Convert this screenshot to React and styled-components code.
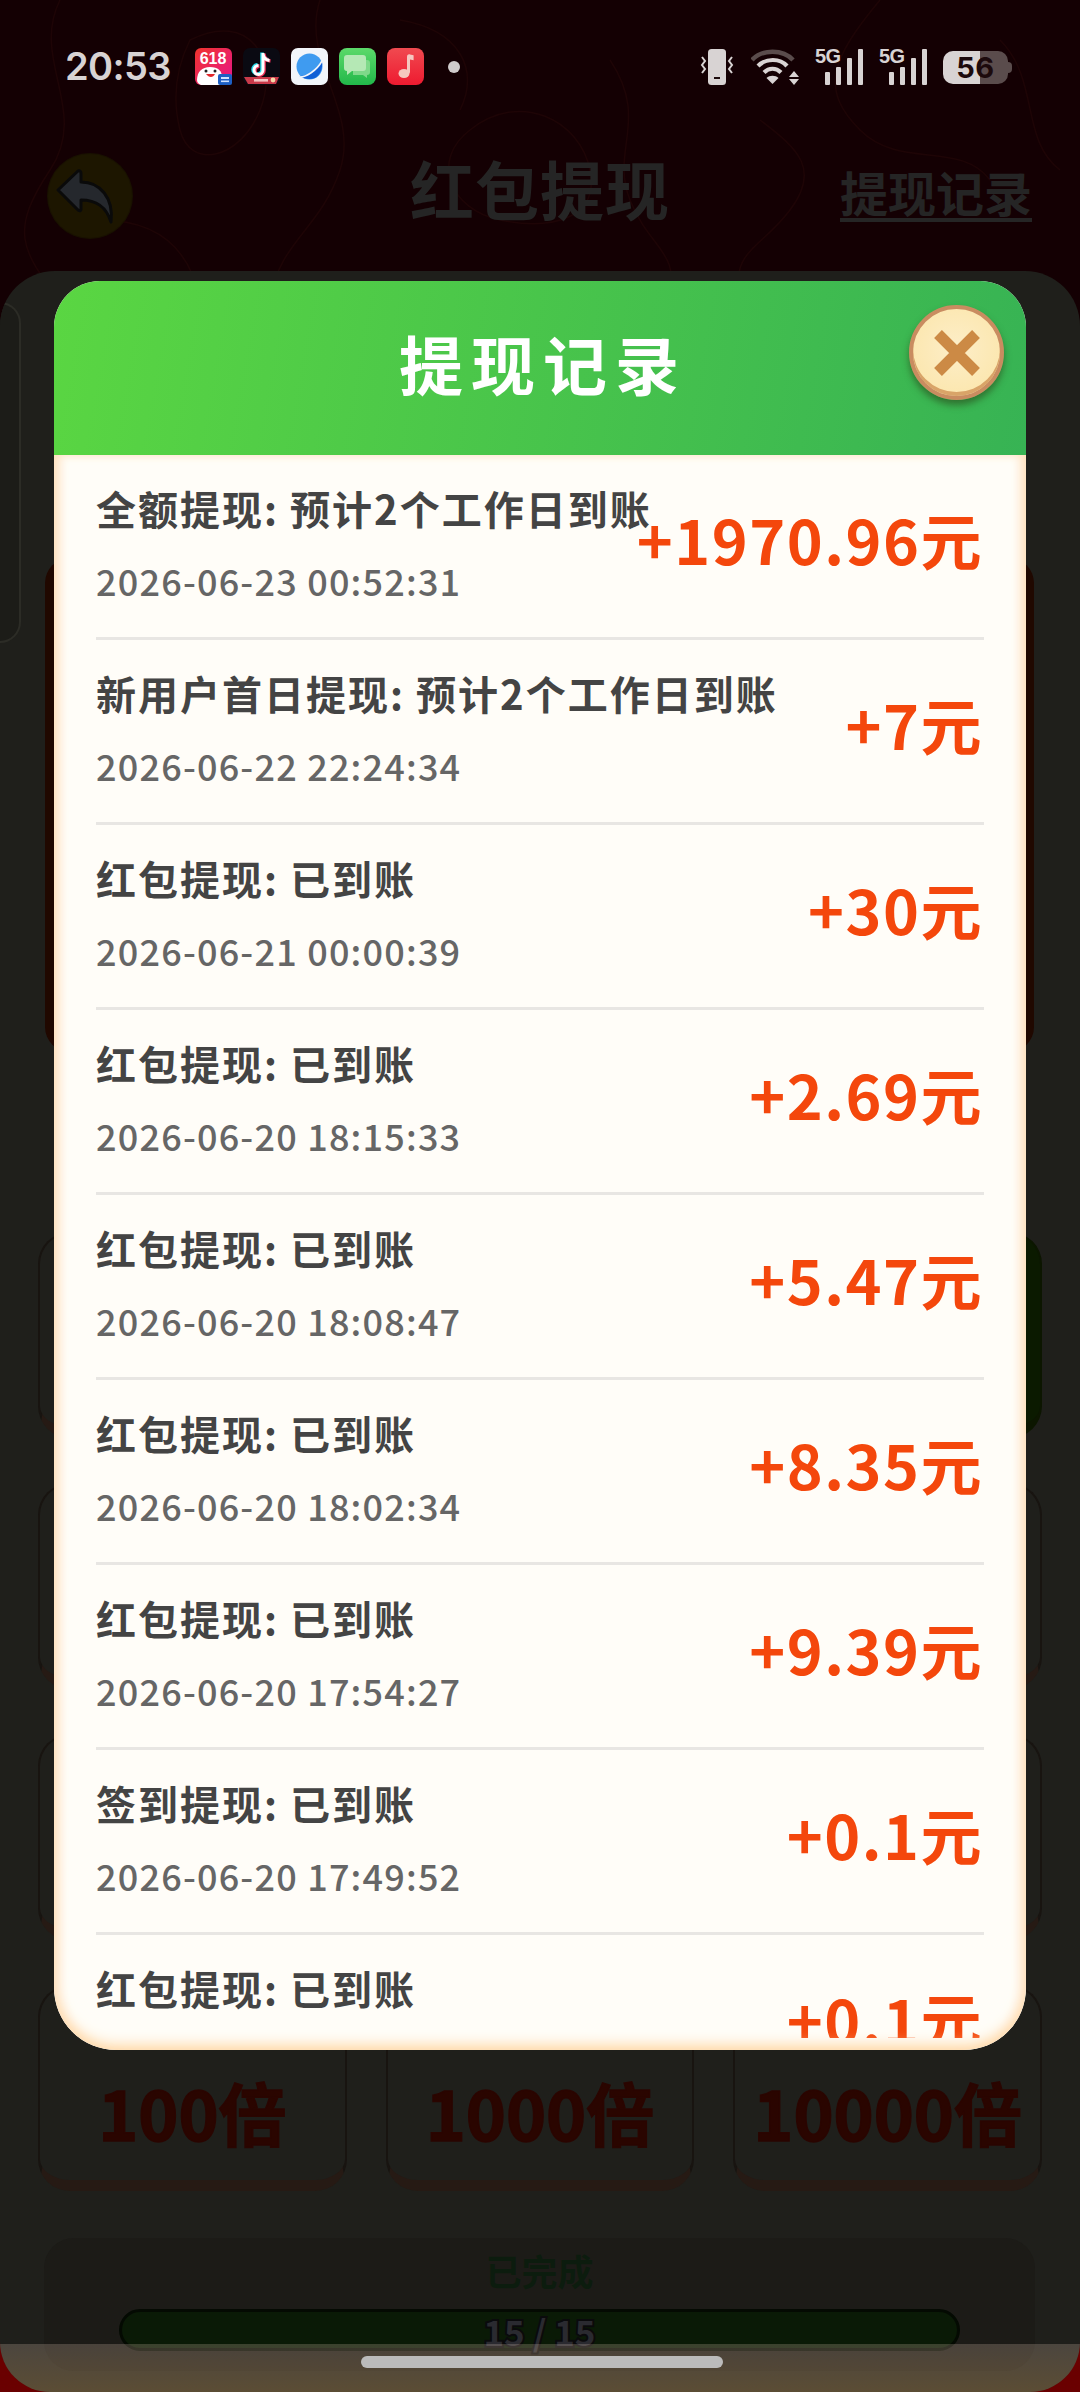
import React from 'react';
import styled, { createGlobalStyle } from 'styled-components';

const CJK = '"Noto Sans CJK SC", "Noto Sans", sans-serif';

const patternSvg = `<svg xmlns='http://www.w3.org/2000/svg' width='1080' height='300' fill='none' stroke='#1e0406' stroke-width='1.500'><path d='M60 0C30 60 90 110 50 170S20 250 60 300M190 40c60-30 90 20 70 70s-70 60-80 20 0-70 10-90zM320 0c-20 60 40 110 20 170s-60 70-70 130M470 130c50-40 110-10 120 40s-40 60-90 50-70-60-30-90zM610 60c40 60 0 90 20 140s50 50 40 100M760 120c40 30 60 50 30 90s-60 40-50 90M880 0c-50 60-60 90-20 130s100 10 130 50M1000 40c40 40 20 100 60 130M400 20c60 10 80 50 60 90M100 220c60 0 90 30 100 80'/></svg>`;

const Global = createGlobalStyle`
  html, body { margin: 0; padding: 0; background: #140003; }
  * { box-sizing: border-box; }
`;

const Page = styled.div`
  position: relative;
  width: 1080px;
  height: 2392px;
  overflow: hidden;
  display: flex;
  flex-direction: column;
  font-family: ${CJK};
  background:
    url("data:image/svg+xml,${encodeURIComponent(patternSvg)}") no-repeat 0 0,
    linear-gradient(#140003 2300px, #6a0000 2300px);
`;

const StatusBar = styled.div`
  height: 121px;
  flex: none;
  padding: 48px 68px 0 65px;
  display: flex;
  justify-content: space-between;
  align-items: flex-start;
`;
const StatusLeft = styled.div`
  display: flex;
  align-items: center;
  height: 37px;
`;
const Clock = styled.span`
  font-family: Inter, sans-serif;
  font-weight: 600;
  font-size: 38px;
  letter-spacing: -0.6px;
  color: #d8d3d3;
  width: 130px;
  line-height: 37px;
`;
const AppIcons = styled.div`
  display: flex;
  gap: 11px;
  align-items: center;
`;
const AppIcon = styled.svg`
  width: 37px;
  height: 37px;
  display: block;
`;
const Dot = styled.span`
  width: 12px;
  height: 12px;
  border-radius: 50%;
  background: #d0cccc;
  margin-left: 24px;
`;
const StatusRight = styled.div`
  display: flex;
  align-items: flex-start;
  gap: 16px;
  height: 37px;
`;
const SmallIcon = styled.svg`
  display: block;
  height: 37px;
  width: ${p => p.$w}px;
`;
const Signal = styled.div`
  position: relative;
  width: 48px;
  height: 37px;
  display: flex;
  align-items: flex-end;
  justify-content: flex-end;
  gap: 5.5px;
`;
const NetLabel = styled.span`
  position: absolute;
  left: 0;
  top: -2px;
  font-family: "Liberation Sans", sans-serif;
  font-weight: 700;
  font-size: 20px;
  line-height: 20px;
  letter-spacing: -0.5px;
  color: #d8d3d3;
`;
const SignalBar = styled.span`
  width: 5.5px;
  height: ${p => p.$h}px;
  background: #d8d3d3;
  border-radius: 1px;
`;
const Battery = styled.div`
  position: relative;
  width: 65px;
  height: 33px;
  margin: 3px 4px 0 0;
  border-radius: 10px;
  background: linear-gradient(90deg, #d8d3d3 57%, #5a4c4c 57%);
  display: flex;
  align-items: center;
  justify-content: center;
  font-family: Inter, sans-serif;
  font-weight: 700;
  font-size: 29px;
  letter-spacing: 0.5px;
  color: #1c0a0c;
  &::after {
    content: '';
    position: absolute;
    right: -4px;
    top: 11px;
    width: 4px;
    height: 11px;
    border-radius: 0 4px 4px 0;
    background: #5a4c4c;
  }
`;

const Header = styled.div`
  height: 150px;
  flex: none;
  display: grid;
  grid-template-columns: 1fr auto 1fr;
  align-items: center;
  padding: 0 48px;
`;
const BackButton = styled.div`
  width: 84px;
  height: 84px;
  border-radius: 50%;
  background: #1d1600;
  box-shadow: 0 0 0 1px #191100;
`;
const PageTitle = styled.div`
  font-weight: 700;
  font-size: 64px;
  letter-spacing: 1px;
  line-height: 70px;
  color: #252525;
  margin-bottom: 19px;
`;
const RecordsLink = styled.div`
  justify-self: end;
  font-weight: 700;
  font-size: 48px;
  line-height: 54px;
  color: #252525;
  border-bottom: 4px solid #252525;
  margin-bottom: 6px;
`;

const Panel = styled.div`
  position: relative;
  flex: 1;
  background: #1f1f1b;
  border-radius: 55px 55px 50px 50px;
  padding-top: 31px;
  overflow: hidden;
  &::after {
    content: '';
    position: absolute;
    left: 0;
    right: 0;
    bottom: 0;
    height: 48px;
    background: linear-gradient(rgba(255, 225, 205, 0.2), rgba(255, 200, 120, 0.27));
  }
`;
const TopRow = styled.div`
  display: flex;
  align-items: flex-start;
  height: 750px;
`;
const SideStrip = styled.div`
  width: 21px;
  height: 341px;
  flex: none;
  background: #1c1c18;
  border: 2px solid #2c2c26;
  border-left: none;
  border-radius: 0 26px 26px 0;
`;
const RedCard = styled.div`
  flex: 1;
  height: 494px;
  margin: 256px 46px 0 24px;
  background: #200800;
  border-radius: 25px;
`;
const MultiplierGrid = styled.div`
  margin: 180px 38px 0;
  display: grid;
  grid-template-columns: repeat(3, 1fr);
  column-gap: 39px;
  row-gap: 45px;
`;
const MultiplierButton = styled.div`
  height: 206px;
  border: 2px solid ${p => (p.$done ? '#0c1600' : '#181410')};
  border-bottom: 11px solid ${p => (p.$done ? '#0c1600' : '#261a14')};
  border-radius: 32px;
  background: ${p => (p.$done ? '#0b1a00' : '#1f1f1b')};
  display: flex;
  align-items: center;
  justify-content: center;
  font-weight: 700;
  font-size: 68px;
  color: #2a0500;
  -webkit-text-stroke: 1.5px #2a0500;
  padding-top: 56px;
`;
const ProgressCard = styled.div`
  margin: 47px 45px 0 44px;
  height: 133px;
  border-radius: 30px;
  background: #1c1b17;
  display: flex;
  flex-direction: column;
  align-items: center;
  padding: 10px 75px 0;
`;
const ProgressLabel = styled.div`
  font-weight: 700;
  font-size: 36px;
  line-height: 44px;
  color: #0c1c0e;
`;
const ProgressBar = styled.div`
  margin-top: 17px;
  width: 100%;
  height: 42px;
  flex: none;
  border: 3px solid #040a02;
  border-radius: 21px;
  background: #0a1a06;
  display: flex;
  align-items: center;
  justify-content: center;
  font-weight: 700;
  font-size: 35px;
  color: #2a2a30;
  paint-order: stroke fill;
  -webkit-text-stroke: 4px #0a0a0c;
`;
const HomeBar = styled.div`
  position: absolute;
  left: 361px;
  top: 2356px;
  width: 362px;
  height: 12px;
  border-radius: 6px;
  background: #bbbbbb;
`;

const Modal = styled.div`
  position: absolute;
  left: 54px;
  top: 281px;
  width: 972px;
  height: 1769px;
  border-radius: 46px 46px 62px 62px;
  overflow: hidden;
  display: flex;
  flex-direction: column;
  background: #fffdf8;
  &::after {
    content: '';
    position: absolute;
    inset: 174px 0 0;
    border-radius: 0 0 62px 62px;
    box-shadow: inset 0 -5px 14px #ffd9a8, inset 8px 0 10px -2px #ffeedd, inset -8px 0 10px -2px #ffeedd;
    pointer-events: none;
  }
`;
const ModalHeader = styled.div`
  height: 174px;
  flex: none;
  background: linear-gradient(100deg, #5ad642, #37b354);
  display: flex;
  align-items: center;
  justify-content: center;
  font-weight: 700;
  font-size: 64px;
  letter-spacing: 8px;
  color: #ffffff;
  padding: 0 0 12px 6px;
`;
const CloseButton = styled.div`
  position: absolute;
  left: 855px;
  top: 24px;
  width: 95px;
  height: 95px;
  border-radius: 50%;
  background: radial-gradient(circle at 50% 45%, #fdeec8, #fbe4a6);
  border: 4px solid #c98c60;
  box-shadow: inset 0 -4px 0 #d9a468, 0 5px 7px rgba(40, 60, 20, 0.55);
  display: flex;
  align-items: center;
  justify-content: center;
  z-index: 1;
`;
const List = styled.div`
  flex: 1;
  min-height: 0;
  margin-bottom: 12px;
  padding: 0 42px;
  overflow: hidden;
`;
const Row = styled.div`
  height: 185px;
  flex: none;
  display: flex;
  align-items: center;
  border-bottom: 3px solid #e8e6e3;
`;
const RowInfo = styled.div`
  flex: 1;
  min-width: 0;
  white-space: nowrap;
  padding-bottom: 6px;
`;
const RowTitle = styled.div`
  font-weight: 700;
  font-size: 40px;
  letter-spacing: 2px;
  line-height: 40px;
  color: #444444;
`;
const RowDate = styled.div`
  margin-top: 34px;
  font-weight: 500;
  font-size: 36px;
  letter-spacing: 1.2px;
  line-height: 36px;
  color: #666666;
`;
const Amount = styled.div`
  flex: none;
  font-weight: 700;
  font-size: 61px;
  letter-spacing: 1.5px;
  line-height: 70px;
  color: #f4470c;
  padding: 0 1px 14px 0;
`;

const ROWS = [
  ['全额提现: 预计2个工作日到账', '2026-06-23 00:52:31', '+1970.96元'],
  ['新用户首日提现: 预计2个工作日到账', '2026-06-22 22:24:34', '+7元'],
  ['红包提现: 已到账', '2026-06-21 00:00:39', '+30元'],
  ['红包提现: 已到账', '2026-06-20 18:15:33', '+2.69元'],
  ['红包提现: 已到账', '2026-06-20 18:08:47', '+5.47元'],
  ['红包提现: 已到账', '2026-06-20 18:02:34', '+8.35元'],
  ['红包提现: 已到账', '2026-06-20 17:54:27', '+9.39元'],
  ['签到提现: 已到账', '2026-06-20 17:49:52', '+0.1元'],
  ['红包提现: 已到账', '', '+0.1元'],
];

const MULTIPLIERS = ['', '', '', '', '', '', '', '', '', '100倍', '1000倍', '10000倍'];

const SignalIcon = () => (
  <Signal>
    <NetLabel>5G</NetLabel>
    <SignalBar $h={13} />
    <SignalBar $h={18} />
    <SignalBar $h={27} />
    <SignalBar $h={36} />
  </Signal>
);

export default function App() {
  return (
    <Page>
      <Global />
      <StatusBar>
        <StatusLeft>
          <Clock>20:53</Clock>
          <AppIcons>
            <AppIcon viewBox="0 0 37 37">
              <defs>
                <linearGradient id="a618" x1="0" y1="0" x2="1" y2="1">
                  <stop offset="0" stopColor="#f0342c" />
                  <stop offset="1" stopColor="#e8158c" />
                </linearGradient>
              </defs>
              <rect width="37" height="37" rx="6" fill="url(#a618)" />
              <path d="M2 32c0-8 5-13 13-13s12 4 12 10v8H6c-2-1-4-2-4-5z" fill="#fff" />
              <text x="18" y="15.500" fontSize="16" fontWeight="700" fill="#fff" textAnchor="middle" fontFamily="Liberation Sans">618</text>
              <circle cx="11" cy="23" r="1.500" fill="#222" />
              <circle cx="20" cy="23" r="1.500" fill="#222" />
              <path d="M11 26c3 4 7 4 9 0z" fill="#e0262a" />
              <rect x="23" y="26" width="14" height="11" rx="2" fill="#1d5fc4" />
              <rect x="26" y="29" width="8" height="2" fill="#cfe2ff" />
              <rect x="26" y="32.500" width="8" height="1.600" fill="#cfe2ff" />
            </AppIcon>
            <AppIcon viewBox="0 0 37 37">
              <rect width="37" height="37" rx="7" fill="#0a0a12" />
              <path d="M20 5v17a4.500 4.500 0 1 1-4.500-4.500M20 6c.6 3.600 3 6 6.500 6.400" fill="none" stroke="#25d8e6" strokeWidth="3.600" transform="translate(-1 -0.6)" />
              <path d="M20 5v17a4.500 4.500 0 1 1-4.500-4.500M20 6c.6 3.600 3 6 6.500 6.400" fill="none" stroke="#f0325a" strokeWidth="3.600" transform="translate(1 0.6)" />
              <path d="M20 5v17a4.500 4.500 0 1 1-4.500-4.500M20 6c.6 3.600 3 6 6.500 6.400" fill="none" stroke="#fff" strokeWidth="3" />
              <path d="M1 29h35l-3 7H5z" fill="#c93a4a" />
              <rect x="11" y="31" width="14" height="2.600" fill="#f3c4c4" />
              <circle cx="30" cy="32" r="2.400" fill="#f5d9a8" />
            </AppIcon>
            <AppIcon viewBox="0 0 37 37">
              <rect width="37" height="37" rx="7" fill="#f2f5fa" />
              <circle cx="18.500" cy="18.500" r="13" fill="#3f9bf0" />
              <path d="M8 28C17 28 27 20 31 13c1 8-2 14-7 17-5 2-11 1-16-2z" fill="#0f5fd6" />
              <path d="M7 29c8 1 19-7 24-16" fill="none" stroke="#f2f5fa" strokeWidth="1.600" />
            </AppIcon>
            <AppIcon viewBox="0 0 37 37">
              <defs>
                <linearGradient id="gmsg" x1="0" y1="0" x2="0" y2="1">
                  <stop offset="0" stopColor="#5cd96a" />
                  <stop offset="1" stopColor="#22b84a" />
                </linearGradient>
              </defs>
              <rect width="37" height="37" rx="8" fill="url(#gmsg)" />
              <path d="M14 12h14a3 3 0 0 1 3 3v9a3 3 0 0 1-3 3v3l-4-3H14z" fill="#7fd98a" />
              <path d="M8 7h16a3 3 0 0 1 3 3v10a3 3 0 0 1-3 3H13l-5 4v-4a3 3 0 0 1-3-3V10a3 3 0 0 1 3-3z" fill="#b5e8b5" />
            </AppIcon>
            <AppIcon viewBox="0 0 37 37">
              <defs>
                <linearGradient id="rmus" x1="0" y1="0" x2="0" y2="1">
                  <stop offset="0" stopColor="#f04a50" />
                  <stop offset="1" stopColor="#ee1a30" />
                </linearGradient>
              </defs>
              <rect width="37" height="37" rx="8" fill="url(#rmus)" />
              <path d="M20 24V9c0-2 1-3 3-2.600l3.600.8v5L23 11.500V25" fill="#f5c8c0" />
              <ellipse cx="17" cy="25.500" rx="5.500" ry="4.500" fill="#f5c8c0" />
            </AppIcon>
          </AppIcons>
          <Dot />
        </StatusLeft>
        <StatusRight>
          <SmallIcon $w={36} viewBox="0 0 36 37">
            <rect x="9" y="1" width="18" height="36" rx="3.500" fill="#d8d3d3" />
            <rect x="15" y="29" width="6" height="2" fill="#1c0a0c" />
            <path d="M3 9l3 4-3 4 3 4-3 4" fill="none" stroke="#d8d3d3" strokeWidth="2" />
            <path d="M33 9l-3 4 3 4-3 4 3 4" fill="none" stroke="#d8d3d3" strokeWidth="2" />
          </SmallIcon>
          <SmallIcon $w={48} viewBox="0 0 48 37">
            <path d="M1 12C11 1 32 1 42 12" fill="none" stroke="#5a4c4c" strokeWidth="4.500" />
            <path d="M7 18c8-8 22-8 29 0" fill="none" stroke="#d8d3d3" strokeWidth="4.200" />
            <path d="M13 24.500c5-5 12-5 17 0" fill="none" stroke="#d8d3d3" strokeWidth="4.200" />
            <path d="M21.500 36l-6-6c3-3 9-3 12 0z" fill="#d8d3d3" />
            <path d="M43 23l5 6H38zM43 37l5-6H38z" fill="#d8d3d3" />
          </SmallIcon>
          <SignalIcon />
          <SignalIcon />
          <Battery>56</Battery>
        </StatusRight>
      </StatusBar>

      <Header>
        <BackButton>
          <svg width="84" height="84" viewBox="0 0 84 84">
            <path
              d="M10 36 L30 17 Q33 16 33 20 L33 28 C52 28 66 44 63 68 C58 52 48 46 33 46 L33 55 Q33 58 30 56 Z"
              fill="#25282d"
              stroke="#0a0a0a"
              strokeWidth="3"
              strokeLinejoin="round"
            />
          </svg>
        </BackButton>
        <PageTitle>红包提现</PageTitle>
        <RecordsLink>提现记录</RecordsLink>
      </Header>

      <Panel>
        <TopRow>
          <SideStrip />
          <RedCard />
        </TopRow>
        <MultiplierGrid>
          {MULTIPLIERS.map((label, i) => (
            <MultiplierButton key={i} $done={i === 2}>{label}</MultiplierButton>
          ))}
        </MultiplierGrid>
        <ProgressCard>
          <ProgressLabel>已完成</ProgressLabel>
          <ProgressBar>15 / 15</ProgressBar>
        </ProgressCard>
      </Panel>

      <Modal>
        <ModalHeader>提现记录</ModalHeader>
        <List>
          {ROWS.map(([title, date, amount], i) => (
            <Row key={i}>
              <RowInfo>
                <RowTitle>{title}</RowTitle>
                <RowDate>{date || '\u00a0'}</RowDate>
              </RowInfo>
              <Amount>{amount}</Amount>
            </Row>
          ))}
        </List>
        <CloseButton>
          <svg width="52" height="52" viewBox="0 0 52 52">
            <path d="M7 7L45 45M45 7L7 45" stroke="#cc8a45" strokeWidth="11" />
          </svg>
        </CloseButton>
      </Modal>
      <HomeBar />
    </Page>
  );
}
